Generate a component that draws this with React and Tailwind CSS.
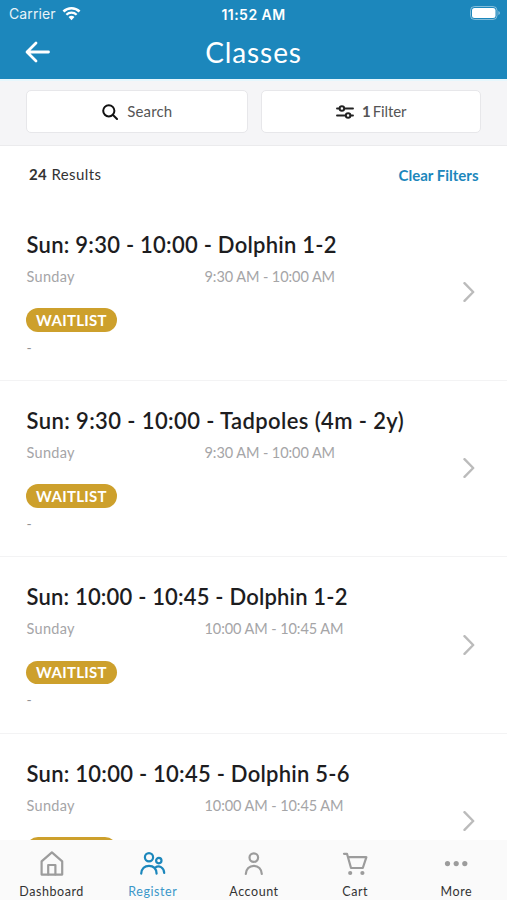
const classes = [
  { title: "Sun: 9:30 - 10:00 - Dolphin 1-2", day: "Sunday", time: "9:30 AM - 10:00 AM", tracking: "tracking-[0.250px]" },
  { title: "Sun: 9:30 - 10:00 - Tadpoles (4m - 2y)", day: "Sunday", time: "9:30 AM - 10:00 AM", tracking: "tracking-[0.390px]" },
  { title: "Sun: 10:00 - 10:45 - Dolphin 1-2", day: "Sunday", time: "10:00 AM - 10:45 AM", tracking: "tracking-[0.180px]" },
  { title: "Sun: 10:00 - 10:45 - Dolphin 5-6", day: "Sunday", time: "10:00 AM - 10:45 AM", tracking: "tracking-[0.250px]" },
];

function Icon({ children, className, strokeWidth = 2, viewBox = "0 0 24 24" }) {
  return (
    <svg
      viewBox={viewBox}
      className={className}
      fill="none"
      stroke="currentColor"
      strokeWidth={strokeWidth}
      strokeLinecap="round"
      strokeLinejoin="round"
      aria-hidden="true"
    >
      {children}
    </svg>
  );
}

const tabs = [
  {
    label: "Dashboard",
    icon: (
      <>
        <path d="M2.600 11.400 12.900 2.400l10.300 9V24.600H2.600z" />
        <path d="M9.200 24.400V15h7.200v9.400" />
      </>
    ),
  },
  {
    label: "Register",
    active: true,
    icon: (
      <>
        <circle cx="9" cy="7.200" r="4.100" />
        <circle cx="18.800" cy="10.600" r="2.700" />
        <path d="M1.200 23.600c.3-5 3.500-7.800 7.800-7.800s7.300 2.800 7.600 7.800" />
        <path d="M15.200 17.600c3.800-2.600 8.800-.4 9 5.400" />
      </>
    ),
  },
  {
    label: "Account",
    icon: (
      <>
        <circle cx="12.800" cy="7.600" r="4.300" />
        <path d="M4.800 24c.2-5 3.600-8.200 8-8.200s7.800 3.200 8 8.200" />
      </>
    ),
  },
  {
    label: "Cart",
    icon: (
      <>
        <path d="M2 3.800h3L9 18h11.800L24.400 7.200H6" />
        <circle cx="8.200" cy="23" r="1" fill="currentColor" />
        <circle cx="20.400" cy="23" r="1" fill="currentColor" />
      </>
    ),
  },
  {
    label: "More",
    icon: (
      <g fill="currentColor" stroke="none">
        <circle cx="4.500" cy="13.600" r="2.600" />
        <circle cx="13.200" cy="13.600" r="2.600" />
        <circle cx="21.800" cy="13.600" r="2.600" />
      </g>
    ),
  },
];

function StatusBar() {
  return (
    <div className="grid h-7 grid-cols-3 items-center pl-[9px] pr-[6px] font-['Inter',sans-serif]">
      <div className="flex items-center gap-[6px] pb-px">
        <span className="text-[14px] tracking-[0.100px] opacity-90">Carrier</span>
        <svg viewBox="0 0 20 15" className="h-[15px] w-[19px]" fill="none" stroke="currentColor" aria-hidden="true">
          <path d="M1.500 5.400a12.200 12.200 0 0 1 17 0" strokeWidth="2.600" />
          <path d="M4.600 8.800a7.800 7.800 0 0 1 10.800 0" strokeWidth="2.400" />
          <path d="M10 14.500 6.900 11.300a4.500 4.500 0 0 1 6.200 0z" fill="currentColor" stroke="none" />
        </svg>
      </div>
      <div className="pr-[3px] text-center text-[14px] font-semibold tracking-[0.450px]">11:52 AM</div>
      <svg viewBox="0 0 31 14" className="mb-[2px] h-[14px] w-[31px] justify-self-end" aria-hidden="true">
        <rect x="0.500" y="0.500" width="26.500" height="13" rx="4" fill="none" stroke="currentColor" opacity="0.450" />
        <rect x="2" y="2" width="23.500" height="10" rx="2.500" fill="currentColor" />
        <path d="M28.500 5v4a2.200 2.200 0 0 0 0-4z" fill="currentColor" opacity="0.600" />
      </svg>
    </div>
  );
}

function ClassRow({ title, day, time, tracking }) {
  return (
    <li className="flex h-[176.400px] shrink-0 items-start border-b border-[#f3f3f4] pl-[26.500px] pr-[32px] pt-[25px]">
      <div className="min-w-0 flex-1">
        <h2 className={`whitespace-nowrap text-[22px] font-semibold leading-[30px] text-[#1d1d1f] ${tracking}`}>{title}</h2>
        <div className="mt-[7px] flex text-[14.500px] leading-5 text-[#a5a5a7]">
          <span className="w-[178px] tracking-[0.300px]">{day}</span>
          <span className="tracking-[-0.080px]">{time}</span>
        </div>
        <span className="-ml-[0.500px] mt-[21.600px] flex h-[23.500px] w-[91px] items-center justify-center rounded-full bg-[#cda02c] text-[15px] font-bold tracking-[0.300px] text-white">
          WAITLIST
        </span>
        <div className="mt-[6px] text-[14px] leading-5 text-[#929294]">-</div>
      </div>
      <Icon viewBox="0 0 12 20" strokeWidth={2.400} className="mt-[52.600px] h-5 w-3 text-[#bbb]">
        <path d="M1.500 1.200 10.200 10l-8.700 8.800" />
      </Icon>
    </li>
  );
}

export default function App() {
  return (
    <div className="flex h-[900px] w-[507px] flex-col overflow-hidden bg-white font-['Lato',sans-serif]">
      <header className="h-[79px] shrink-0 bg-[#1c87bc] text-white">
        <StatusBar />
        <div className="grid h-[48px] grid-cols-[80px_1fr_80px] items-center">
          <Icon viewBox="0 0 26 22" strokeWidth={2.800} className="ml-[25px] h-[22px] w-[26px]">
            <path d="M11 2 2 11l9 9M2.200 11h21.300" />
          </Icon>
          <h1 className="text-center text-[28px] leading-8 tracking-[0.900px]">Classes</h1>
        </div>
      </header>

      <div className="flex h-[67px] shrink-0 gap-[13px] border-b border-t-2 border-b-[#ebebed] border-t-[#e6f7fd] bg-[#f5f5f7] px-[26px] pt-[9px]">
        <button className="flex h-[43px] flex-1 items-center justify-center gap-[9px] rounded-[5px] border border-[#e7e7ea] bg-white pl-px text-[15px] text-[#555]">
          <Icon viewBox="0 0 16 16" className="size-4 text-[#111]">
            <circle cx="6.800" cy="6.800" r="5.600" />
            <path d="m11 11 4 4" />
          </Icon>
          <span className="tracking-[0.150px]">Search</span>
        </button>
        <button className="flex h-[43px] flex-1 items-center justify-center gap-[8px] rounded-[5px] border border-[#e7e7ea] bg-white text-[15px] text-[#555]">
          <Icon viewBox="0 0 18 14" strokeWidth={1.900} className="h-[14px] w-[18px] text-[#222]">
            <path d="M1 3.500h2.500M8.300 3.500H17M1 10.500h8.700M14.500 10.500H17" />
            <circle cx="5.900" cy="3.500" r="2.300" />
            <circle cx="12.100" cy="10.500" r="2.300" />
          </Icon>
          <span className="-mr-px tracking-[-0.100px]">
            <b className="mr-[2px] font-bold">1</b>Filter
          </span>
        </button>
      </div>

      <div className="flex h-[58.500px] shrink-0 items-center justify-between pb-px pl-[29px] pr-[28.500px] text-[15px]">
        <span className="pb-px tracking-[0.400px] text-[#333]">
          <b>24</b> Results
        </span>
        <button className="font-bold text-[#1c87bc]">Clear Filters</button>
      </div>

      <ul className="flex min-h-0 flex-1 flex-col overflow-hidden">
        {classes.map((item) => (
          <ClassRow key={item.title} {...item} />
        ))}
      </ul>

      <nav className="grid h-[60px] shrink-0 grid-cols-5 bg-[#fafafa] pl-px">
        {tabs.map((tab) => (
          <button
            key={tab.label}
            className={`flex flex-col items-center pt-[10px] ${tab.active ? "text-[#1c87bc]" : "text-[#9c9c9c]"}`}
          >
            <Icon viewBox="0 0 26 26" strokeWidth={2.200} className="size-[26px]">
              {tab.icon}
            </Icon>
            <span className={`mt-[8px] text-[12.500px] leading-4 tracking-[0.550px] ${tab.active ? "text-[#3a97c9]" : "text-[#333]"}`}>
              {tab.label}
            </span>
          </button>
        ))}
      </nav>
    </div>
  );
}
